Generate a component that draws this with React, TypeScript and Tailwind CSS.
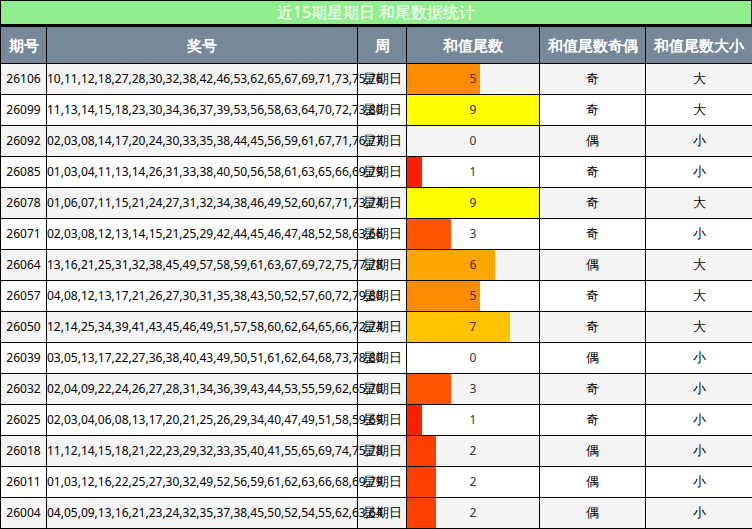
const rows: [string, string, number, string, string][] = [
  ["26106","10,11,12,18,27,28,30,32,38,42,46,53,62,65,67,69,71,73,75,76",5,"奇","大"],
  ["26099","11,13,14,15,18,23,30,34,36,37,39,53,56,58,63,64,70,72,73,80",9,"奇","大"],
  ["26092","02,03,08,14,17,20,24,30,33,35,38,44,45,56,59,61,67,71,76,77",0,"偶","小"],
  ["26085","01,03,04,11,13,14,26,31,33,38,40,50,56,58,61,63,65,66,69,79",1,"奇","小"],
  ["26078","01,06,07,11,15,21,24,27,31,32,34,38,46,49,52,60,67,71,73,74",9,"奇","大"],
  ["26071","02,03,08,12,13,14,15,21,25,29,42,44,45,46,47,48,52,58,63,66",3,"奇","小"],
  ["26064","13,16,21,25,31,32,38,45,49,57,58,59,61,63,67,69,72,75,77,78",6,"偶","大"],
  ["26057","04,08,12,13,17,21,26,27,30,31,35,38,43,50,52,57,60,72,79,80",5,"奇","大"],
  ["26050","12,14,25,34,39,41,43,45,46,49,51,57,58,60,62,64,65,66,72,74",7,"奇","大"],
  ["26039","03,05,13,17,22,27,36,38,40,43,49,50,51,61,62,64,68,73,78,80",0,"偶","小"],
  ["26032","02,04,09,22,24,26,27,28,31,34,36,39,43,44,53,55,59,62,65,70",3,"奇","小"],
  ["26025","02,03,04,06,08,13,17,20,21,25,26,29,34,40,47,49,51,58,59,69",1,"奇","小"],
  ["26018","11,12,14,15,18,21,22,23,29,32,33,35,40,41,55,65,69,74,75,78",2,"偶","小"],
  ["26011","01,03,12,16,22,25,27,30,32,49,52,56,59,61,62,63,66,68,69,79",2,"偶","小"],
  ["26004","04,05,09,13,16,21,23,24,32,35,37,38,45,50,52,54,55,62,63,64",2,"偶","小"],
];
const colors: Record<number,string> = {0:"transparent",1:"#ff2000",2:"#ff4000",3:"#ff5500",4:"#ff7000",5:"#ff8c00",6:"#ffa500",7:"#ffc300",8:"#ffe000",9:"#ffff00"};
const serif = "[font-family:'Liberation_Serif','Noto_Sans_CJK_SC',serif]";
const sans = "[font-family:'Noto_Sans_CJK_SC','Noto_Sans',sans-serif]";
export default function App() {
  return (
    <div className="w-[752px] h-[529px] overflow-hidden bg-white">
      <div className={`h-[26px] bg-[#90ee90] border border-black border-b-2 text-white text-[16px] leading-[22px] text-center ${sans}`}>近15期星期日 和尾数据统计</div>
      <table className="w-[752px] table-fixed border-collapse text-black">
        <colgroup>
          <col className="w-[46px]" /><col className="w-[311px]" /><col className="w-[49px]" /><col className="w-[133px]" /><col className="w-[106px]" /><col className="w-[107px]" />
        </colgroup>
        <thead>
          <tr className={`h-[37px] bg-[#778899] text-white text-[15px] font-bold ${sans}`}>
            {["期号","奖号","周","和值尾数","和值尾数奇偶","和值尾数大小"].map(h=>(
              <th key={h} className="border border-black p-0 font-bold whitespace-nowrap">{h}</th>
            ))}
          </tr>
        </thead>
        <tbody>
          {rows.map((r,i)=>(
            <tr key={r[0]} className={`h-[31px] ${i%2===0?"bg-[#f4f4f4]":"bg-white"}`}>
              <td className={`border border-black text-center text-[12px] p-0 ${serif}`}>{r[0]}</td>
              <td className={`border border-black text-center text-[12px] p-0 whitespace-nowrap ${serif}`}>{r[1]}</td>
              <td className={`border border-black text-center text-[13px] p-0 whitespace-nowrap ${sans}`}>星期日</td>
              <td className="border border-black p-0 relative">
                <div className="absolute left-0 top-0 bottom-0" style={{width:`${(r[2]/9)*100}%`,background:colors[r[2]]}} />
                <div className={`relative text-center text-[12px] text-[#333] ${serif}`}>{r[2]}</div>
              </td>
              <td className={`border border-black text-center text-[13px] p-0 ${sans}`}>{r[3]}</td>
              <td className={`border border-black text-center text-[13px] p-0 ${sans}`}>{r[4]}</td>
            </tr>
          ))}
        </tbody>
      </table>
    </div>
  );
}
